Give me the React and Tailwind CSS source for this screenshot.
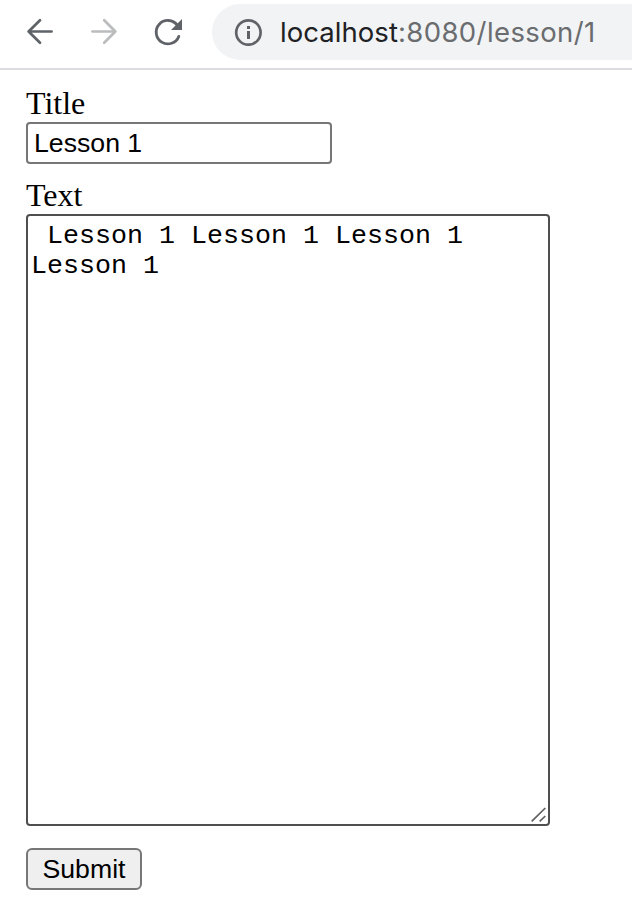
function Toolbar() {
  return (
    <header className="flex h-[70px] items-start border-b-2 border-[#dadce0] pt-1">
      <nav className="flex h-14 w-[212px] shrink-0 items-center">
        <svg className="ml-6 h-8 w-8" viewBox="0 0 32 32" fill="none" stroke="#5f6368" strokeWidth="2.7" strokeLinecap="round" strokeLinejoin="round">
          <path d="M27.6 15.5H4.6M16 4.3 4.6 15.5 16 26.7" />
        </svg>
        <svg className="ml-8 h-8 w-8" viewBox="0 0 32 32" fill="none" stroke="#babcbe" strokeWidth="2.7" strokeLinecap="round" strokeLinejoin="round">
          <path d="M4.4 15.5h23M16.2 4.3l11.2 11.2-11.2 11.2" />
        </svg>
        <svg className="ml-8 h-8 w-8" viewBox="0 0 32 32" fill="none">
          <path d="M26.8 20.4A11.7 11.7 0 1 1 25.3 9.2" stroke="#5f6368" strokeWidth="2.8" strokeLinecap="round" />
          <path d="M30 3v11H19z" fill="#5f6368" />
        </svg>
      </nav>
      <div className="flex h-14 flex-1 items-center rounded-l-full bg-[#f1f3f4] pl-[22px]">
        <svg className="h-7 w-7 shrink-0" viewBox="0 0 28 28" fill="none">
          <circle cx="14.4" cy="14.5" r="12.2" stroke="#5f6368" strokeWidth="2.7" />
          <path d="M13 8h3v3h-3zM13 13h3v8h-3z" fill="#5f6368" />
        </svg>
        <span className="ml-[18px] whitespace-nowrap pt-0.5 font-['Inter',sans-serif] text-[27.5px] leading-none tracking-[0.4px] text-[#6a6c6f]">
          <span className="tracking-[0.05px] text-[#202124]">localhost</span>:8080/lesson/1
        </span>
      </div>
    </header>
  );
}

export default function App() {
  return (
    <div className="min-h-screen bg-white text-black">
      <Toolbar />
      <form className="flex flex-col items-start px-[26px] pt-4 font-['Liberation_Serif',serif] text-[32px]">
        <label htmlFor="title" className="h-9 leading-[34px]">Title</label>
        <input
          id="title"
          defaultValue="Lesson 1"
          className="h-[42px] w-[306px] rounded-[4px] border-2 border-[#767676] bg-white px-1.5 font-['Liberation_Sans',sans-serif] text-[26.67px] outline-none"
        />
        <label htmlFor="text" className="mt-3.5 h-9 leading-[34px]">Text</label>
        <div className="relative h-[612px] w-[524px]">
          <textarea
            id="text"
            defaultValue=" Lesson 1 Lesson 1 Lesson 1 Lesson 1"
            className="block h-full w-full resize-none overflow-hidden rounded-[4px] border-2 border-[#4f4f4f] bg-white px-[3px] pb-1 pt-[5px] font-['Liberation_Mono',monospace] text-[26.67px] leading-[30px] outline-none"
          />
          <svg className="absolute bottom-1 right-1 h-4 w-4" viewBox="0 0 16 16" fill="none" stroke="#606060" strokeWidth="1.7">
            <path d="M1.7 15.3 15.3 2M9.7 15.3l5.6-5.3" />
          </svg>
        </div>
        <button
          type="button"
          className="mt-[22px] h-[42px] w-[116px] rounded-[6px] border-2 border-[#767676] bg-[#efefef] font-['Liberation_Sans',sans-serif] text-[26.67px] leading-none"
        >
          Submit
        </button>
      </form>
    </div>
  );
}
